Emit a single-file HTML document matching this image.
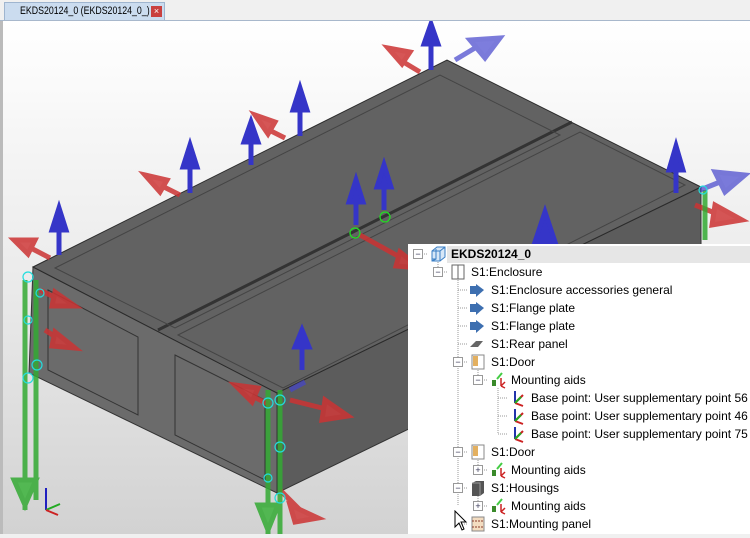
<!DOCTYPE html>
<html><head><meta charset="utf-8"><style>
html,body{margin:0;padding:0;width:750px;height:534px;overflow:hidden;background:#f0f0f0;font-family:"Liberation Sans",sans-serif}
#tabbar{position:absolute;left:0;top:0;width:750px;height:20px;background:#f0f0f0;border-bottom:1px solid #a8b8cc}
#tab{position:absolute;left:4px;top:2px;width:161px;height:18px;background:#cbdcef;border:1px solid #9fb5cf;border-bottom:none;color:#000;box-sizing:border-box}
#tt{position:absolute;left:15px;top:0;font-size:11px;line-height:17px;white-space:nowrap;transform:scaleX(0.8);transform-origin:0 0}
#x{position:absolute;left:146px;top:3px;width:11px;height:11px;background:#c9403f;color:#fff;font-size:9px;line-height:11px;text-align:center}
#scene{position:absolute;left:0;top:21px}
#tree{position:absolute;left:408px;top:244px;width:342px;height:290px;background:#fff;font-size:12px;color:#000}
.r{position:absolute;height:18px;line-height:18px;white-space:nowrap}
.hl{position:absolute;left:39px;top:2px;width:303px;height:17px;background:#e6e6e6}
.b{position:absolute;width:8px;height:8px;border:1px solid #999;background:#fff;font-size:9px;line-height:8px;text-align:center;color:#335}
</style></head><body>
<div id="tabbar"><div id="tab"><span id="tt">EKDS20124_0 (EKDS20124_0_)</span><div id="x">×</div></div></div>
<svg id="scene" width="750" height="513" viewBox="0 21 750 513">
<defs><linearGradient id="bg" x1="0" y1="0" x2="0" y2="1"><stop offset="0" stop-color="#ffffff"/><stop offset="0.5" stop-color="#ebebeb"/><stop offset="1" stop-color="#d2d2d2"/></linearGradient></defs>
<rect x="0" y="21" width="750" height="513" fill="url(#bg)"/>
<rect x="0" y="21" width="3" height="513" fill="#bbb"/>
<polygon points="33,267 277,393 277,493 29,373" fill="#6b6b6b" stroke="#333"/>
<polygon points="277,393 701,187 701,287 277,493" fill="#5c5c5c" stroke="#333"/>
<polygon points="33,267 447,60 701,187 277,393" fill="#626262" stroke="#2a2a2a"/>
<line x1="158" y1="330" x2="572" y2="122" stroke="#333" stroke-width="3"/>
<polygon points="55,268 440,75 560,135 175,328" fill="none" stroke="#444"/>
<polygon points="178,335 580,132 685,185 283,388" fill="none" stroke="#444"/>
<polygon points="48,290 138,337 138,415 48,370" fill="none" stroke="#333"/>
<polygon points="175,355 265,400 265,480 175,435" fill="none" stroke="#333"/>
<g stroke-width="5" stroke-linecap="butt">
<g stroke="#3535c8" fill="#3535c8">
<line x1="431" y1="70" x2="431" y2="42"/><polygon points="424,44 431,24 438,44"/>
<line x1="300" y1="136" x2="300" y2="108"/><polygon points="293,110 300,88 307,110"/>
<line x1="251" y1="165" x2="251" y2="140"/><polygon points="244,142 251,122 258,142"/>
<line x1="190" y1="193" x2="190" y2="165"/><polygon points="183,167 190,145 197,167"/>
<line x1="59" y1="255" x2="59" y2="228"/><polygon points="52,230 59,208 66,230"/>
<line x1="356" y1="225" x2="356" y2="200"/><polygon points="349,202 356,180 363,202"/>
<line x1="384" y1="210" x2="384" y2="185"/><polygon points="377,187 384,165 391,187"/>
<line x1="676" y1="193" x2="676" y2="168"/><polygon points="669,170 676,146 683,170"/>
<line x1="302" y1="370" x2="302" y2="345"/><polygon points="295,347 302,330 309,347"/>
<polygon points="535,242 545,212 555,242"/>
</g>
<g stroke="#cc3333" fill="#d03a3a" opacity="0.85">
<line x1="420" y1="72" x2="400" y2="60"/><polygon points="388,48 410,52 402,64"/>
<line x1="285" y1="138" x2="265" y2="128"/><polygon points="255,115 275,122 268,134"/>
<line x1="180" y1="195" x2="160" y2="185"/><polygon points="145,175 167,180 160,192"/>
<line x1="50" y1="258" x2="25" y2="245"/><polygon points="14,240 35,240 28,254"/>
<line x1="360" y1="235" x2="405" y2="260"/><polygon points="400,252 420,268 396,266"/>
<line x1="40" y1="290" x2="60" y2="300"/><polygon points="55,292 75,306 52,306"/>
<line x1="45" y1="330" x2="60" y2="340"/><polygon points="55,332 75,348 52,346"/>
<line x1="290" y1="400" x2="330" y2="410"/><polygon points="325,400 348,416 322,420"/>
<line x1="270" y1="405" x2="250" y2="395"/><polygon points="235,385 258,388 252,402"/>
<line x1="695" y1="205" x2="720" y2="215"/><polygon points="715,205 742,220 712,225"/>
<line x1="280" y1="490" x2="300" y2="510"/><polygon points="290,505 318,518 295,522"/>
</g>
<g stroke="#33aa33" fill="#3cb33c" opacity="0.85">
<line x1="25" y1="280" x2="25" y2="510"/><polygon points="14,480 25,505 36,480"/>
<line x1="36" y1="280" x2="36" y2="500"/>
<line x1="268" y1="390" x2="268" y2="534"/><polygon points="258,505 268,530 278,505"/>
<line x1="280" y1="390" x2="280" y2="534"/>
<line x1="705" y1="190" x2="705" y2="240"/>
</g>
<g stroke="#4444cc" fill="#4848d0" opacity="0.7">
<line x1="455" y1="60" x2="480" y2="45"/><polygon points="470,40 500,38 485,58"/>
<line x1="700" y1="190" x2="725" y2="180"/><polygon points="715,172 745,175 725,192"/>
<line x1="290" y1="390" x2="305" y2="382"/>
</g>
</g>
<g fill="none" stroke="#22dddd" stroke-width="1.2">
<circle cx="28" cy="277" r="5"/><circle cx="40" cy="293" r="4"/><circle cx="28" cy="320" r="4"/><circle cx="37" cy="365" r="5"/><circle cx="28" cy="378" r="5"/>
<circle cx="268" cy="403" r="5"/><circle cx="280" cy="400" r="5"/><circle cx="280" cy="447" r="5"/><circle cx="268" cy="478" r="4"/><circle cx="280" cy="498" r="5"/><circle cx="703" cy="190" r="4"/>
</g>
<g fill="none" stroke="#22dd22" stroke-width="1.3"><circle cx="355" cy="233" r="5"/><circle cx="385" cy="217" r="5"/></g>
<g stroke-width="2"><line x1="46" y1="510" x2="46" y2="488" stroke="#2020c0"/><line x1="46" y1="510" x2="60" y2="504" stroke="#2a2"/><line x1="46" y1="510" x2="58" y2="515" stroke="#c22"/></g>
</svg>
<div id="tree">
<div class="hl"></div>
<svg style="position:absolute;left:0;top:0" width="342" height="290"><g stroke="#999" stroke-dasharray="1,1" fill="none">
<path d="M10,10 H20 M30,18 V28 M30,28 H40"/>
<path d="M50,36 V262 M50,46 H60 M50,64 H60 M50,82 H60 M50,100 H60 M50,118 H60 M50,208 H60 M50,244 H60 M50,280 H60"/>
<path d="M70,126 V136 M70,136 H80 M90,144 V190 M90,154 H100 M90,172 H100 M90,190 H100"/>
<path d="M70,216 V226 M70,226 H80 M70,252 V262 M70,262 H80"/>
</g></svg>
<div class="b" style="left:5px;top:5px">−</div>
<div class="r" style="left:21px;top:1px"><svg width="18" height="18"><path d="M3,6 L8,2 H16 V12 L11,16 H3Z M3,6 H11 V16 M11,6 L16,2 M7,4 V14 H3 M7,14 L3,16" fill="#d7e7f7" stroke="#3b7fc4"/></svg></div>
<div class="r" style="left:43px;top:1px;font-weight:bold;">EKDS20124_0</div>
<div class="b" style="left:25px;top:23px">−</div>
<div class="r" style="left:42px;top:19px"><svg width="16" height="18"><rect x="2" y="2" width="12" height="14" fill="#fff" stroke="#666"/><line x1="8" y1="2" x2="8" y2="16" stroke="#666"/></svg></div>
<div class="r" style="left:63px;top:19px">S1:Enclosure</div>
<div class="r" style="left:60px;top:37px"><svg width="18" height="18"><rect x="2" y="5" width="7" height="8" fill="#3d6fb0"/><path d="M8,3 L16,9 L8,16Z" fill="#3d6fb0"/></svg></div>
<div class="r" style="left:83px;top:37px">S1:Enclosure accessories general</div>
<div class="r" style="left:60px;top:55px"><svg width="18" height="18"><rect x="2" y="5" width="7" height="8" fill="#3d6fb0"/><path d="M8,3 L16,9 L8,16Z" fill="#3d6fb0"/></svg></div>
<div class="r" style="left:83px;top:55px">S1:Flange plate</div>
<div class="r" style="left:60px;top:73px"><svg width="18" height="18"><rect x="2" y="5" width="7" height="8" fill="#3d6fb0"/><path d="M8,3 L16,9 L8,16Z" fill="#3d6fb0"/></svg></div>
<div class="r" style="left:83px;top:73px">S1:Flange plate</div>
<div class="r" style="left:60px;top:91px"><svg width="18" height="18"><path d="M2,12 L8,6 H15 L10,12Z" fill="#666"/></svg></div>
<div class="r" style="left:83px;top:91px">S1:Rear panel</div>
<div class="b" style="left:45px;top:113px">−</div>
<div class="r" style="left:62px;top:109px"><svg width="16" height="18"><rect x="2" y="2" width="12" height="14" fill="#fff" stroke="#888"/><rect x="3" y="3" width="5" height="10" fill="#e3b060"/></svg></div>
<div class="r" style="left:83px;top:109px">S1:Door</div>
<div class="b" style="left:65px;top:131px">−</div>
<div class="r" style="left:81px;top:127px"><svg width="18" height="18"><rect x="3" y="9" width="4" height="6" fill="#3a8a2a"/><path d="M8,8 L13,2" stroke="#4c4" stroke-width="2"/><path d="M12,7 V15 M12,15 L16,11 M12,15 L16,17" stroke="#c22" stroke-width="1.5"/></svg></div>
<div class="r" style="left:103px;top:127px">Mounting aids</div>
<div class="r" style="left:101px;top:145px"><svg width="18" height="18"><path d="M6,2 V14" stroke="#2233aa" stroke-width="2"/><path d="M6,14 L14,6 M6,14 L14,17" stroke="#c22" stroke-width="2"/><path d="M6,14 L12,8" stroke="#2a2" stroke-width="2"/></svg></div>
<div class="r" style="left:123px;top:145px">Base point: User supplementary point 56</div>
<div class="r" style="left:101px;top:163px"><svg width="18" height="18"><path d="M6,2 V14" stroke="#2233aa" stroke-width="2"/><path d="M6,14 L14,6 M6,14 L14,17" stroke="#c22" stroke-width="2"/><path d="M6,14 L12,8" stroke="#2a2" stroke-width="2"/></svg></div>
<div class="r" style="left:123px;top:163px">Base point: User supplementary point 46</div>
<div class="r" style="left:101px;top:181px"><svg width="18" height="18"><path d="M6,2 V14" stroke="#2233aa" stroke-width="2"/><path d="M6,14 L14,6 M6,14 L14,17" stroke="#c22" stroke-width="2"/><path d="M6,14 L12,8" stroke="#2a2" stroke-width="2"/></svg></div>
<div class="r" style="left:123px;top:181px">Base point: User supplementary point 75</div>
<div class="b" style="left:45px;top:203px">−</div>
<div class="r" style="left:62px;top:199px"><svg width="16" height="18"><rect x="2" y="2" width="12" height="14" fill="#fff" stroke="#888"/><rect x="3" y="3" width="5" height="10" fill="#e3b060"/></svg></div>
<div class="r" style="left:83px;top:199px">S1:Door</div>
<div class="b" style="left:65px;top:221px">+</div>
<div class="r" style="left:81px;top:217px"><svg width="18" height="18"><rect x="3" y="9" width="4" height="6" fill="#3a8a2a"/><path d="M8,8 L13,2" stroke="#4c4" stroke-width="2"/><path d="M12,7 V15 M12,15 L16,11 M12,15 L16,17" stroke="#c22" stroke-width="1.5"/></svg></div>
<div class="r" style="left:103px;top:217px">Mounting aids</div>
<div class="b" style="left:45px;top:239px">−</div>
<div class="r" style="left:62px;top:235px"><svg width="16" height="18"><path d="M2,4 L6,2 H14 V14 L10,17 H2Z" fill="#555"/><path d="M2,4 H10 V17" stroke="#999" fill="none"/></svg></div>
<div class="r" style="left:83px;top:235px">S1:Housings</div>
<div class="b" style="left:65px;top:257px">+</div>
<div class="r" style="left:81px;top:253px"><svg width="18" height="18"><rect x="3" y="9" width="4" height="6" fill="#3a8a2a"/><path d="M8,8 L13,2" stroke="#4c4" stroke-width="2"/><path d="M12,7 V15 M12,15 L16,11 M12,15 L16,17" stroke="#c22" stroke-width="1.5"/></svg></div>
<div class="r" style="left:103px;top:253px">Mounting aids</div>
<div class="r" style="left:62px;top:271px"><svg width="16" height="18"><rect x="2" y="2" width="12" height="14" fill="#f3dcc0" stroke="#888"/><path d="M2,6 H14 M2,12 H14" stroke="#8a3a2a" stroke-dasharray="2,1"/></svg></div>
<div class="r" style="left:83px;top:271px">S1:Mounting panel</div>
<svg style="position:absolute;left:46px;top:266px" width="14" height="22"><path d="M1,1 V17 L5,13 L8,20 L10,19 L7,12 L12,12Z" fill="#fff" stroke="#000"/></svg>
</div>
</body></html>
